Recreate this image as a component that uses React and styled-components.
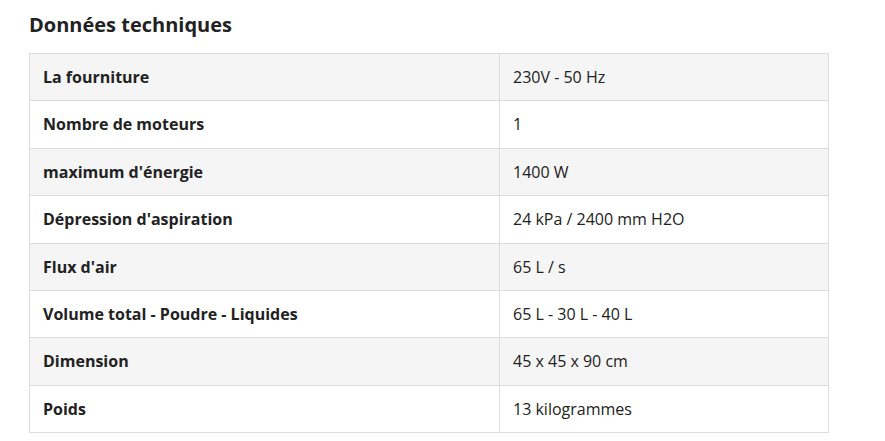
import React from "react";
import styled, { createGlobalStyle } from "styled-components";

const Global = createGlobalStyle`
  html, body { margin: 0; padding: 0; background: #fff; }
  body { font-family: "Open Sans", "Noto Sans", sans-serif; color: #222; }
`;

const Page = styled.div`
  padding: 13px 0 0 29px;
`;

const Title = styled.h2`
  margin: 0 0 16px 0;
  font-size: 20px;
  line-height: 24px;
  font-weight: 700;
  color: #222;
`;

const Table = styled.table`
  width: 800px;
  border-collapse: collapse;
  border: 1px solid #ddd;
  font-size: 16px;
  line-height: 22.4px;
`;

const Row = styled.tr`
  background: ${(p) => (p.$alt ? "#f5f5f5" : "#fff")};
`;

const Cell = styled.td`
  border: 1px solid #ddd;
  padding: 12px 13px;
  vertical-align: middle;
  width: ${(p) => (p.$label ? "443px" : "auto")};
  font-weight: ${(p) => (p.$label ? 700 : 400)};
  color: #222;
`;

const rows = [
  ["La fourniture", "230V - 50 Hz"],
  ["Nombre de moteurs", "1"],
  ["maximum d'énergie", "1400 W"],
  ["Dépression d'aspiration", "24 kPa / 2400 mm H2O"],
  ["Flux d'air", "65 L / s"],
  ["Volume total - Poudre - Liquides", "65 L - 30 L - 40 L"],
  ["Dimension", "45 x 45 x 90 cm"],
  ["Poids", "13 kilogrammes"],
];

export default function App() {
  return (
    <>
      <Global />
      <Page>
        <Title>Données techniques</Title>
        <Table>
          <tbody>
            {rows.map(([k, v], i) => (
              <Row key={k} $alt={i % 2 === 0}>
                <Cell $label>{k}</Cell>
                <Cell>{v}</Cell>
              </Row>
            ))}
          </tbody>
        </Table>
      </Page>
    </>
  );
}
